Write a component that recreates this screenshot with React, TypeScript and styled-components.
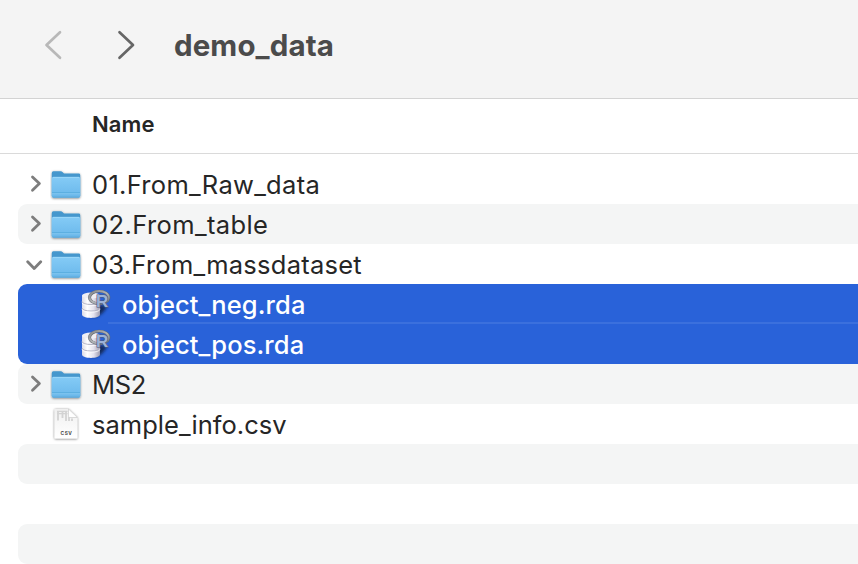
import React from "react";
import styled, { createGlobalStyle } from "styled-components";

const GlobalStyle = createGlobalStyle`
  html, body { margin: 0; background: #fff; overflow: hidden; }
  body { font-family: Inter, "Liberation Sans", sans-serif; color: #262626; }
  * { box-sizing: border-box; }
`;

const Window = styled.main`
  width: 858px;
  height: 564px;
  overflow: hidden;
  background: #fff;
  display: flex;
  flex-direction: column;
`;

const Toolbar = styled.header`
  flex: none;
  height: 99px;
  padding: 0 0 8px 44px;
  display: flex;
  align-items: center;
  background: #f4f4f4;
  border-bottom: 1px solid #d3d3d3;
`;

const NavButton = styled.button<{ $dim?: boolean }>`
  width: 20px;
  height: 32px;
  margin-right: ${(p) => (p.$dim ? 52 : 38)}px;
  padding: 0;
  border: 0;
  background: none;
  color: ${(p) => (p.$dim ? "#b8b8b8" : "#666")};
  svg { display: block; }
`;

const Title = styled.h1`
  margin: 0;
  font-size: 29.5px;
  font-weight: 700;
  line-height: 36px;
  letter-spacing: 0.1px;
  color: #4b4b4b;
`;

const ColumnHeader = styled.div`
  flex: none;
  height: 55px;
  padding: 0 0 4px 92px;
  display: flex;
  align-items: center;
  border-bottom: 1px solid #dadada;
  font-size: 22px;
  font-weight: 600;
  letter-spacing: 0.1px;
`;

const List = styled.div`
  padding: 10px 0 0 18px;
`;

const Row = styled.div<{ $stripe?: boolean }>`
  height: 40px;
  display: flex;
  align-items: center;
  padding-left: 8px;
  border-radius: 9px 0 0 9px;
  background: ${(p) => (p.$stripe ? "#f4f5f5" : "#fff")};
`;

const SelectionGroup = styled.div`
  background: #2962d9;
  border-radius: 9px 0 0 9px;
`;

const SelectionRule = styled.div`
  height: 2px;
  margin: -2px 0 0 90px;
  background: #3b70dd;
`;

const NestedRow = styled.div`
  height: 40px;
  padding-left: 58px;
  display: flex;
  align-items: center;
  color: #fff;
`;

const Slot = styled.span<{ $w: number }>`
  flex: none;
  width: ${(p) => p.$w}px;
  height: 40px;
  display: flex;
  align-items: center;
`;

const Label = styled.span<{ $track: number; $medium?: boolean }>`
  font-size: 25.5px;
  line-height: 40px;
  height: 40px;
  padding-top: 1px;
  font-weight: ${(p) => (p.$medium ? 500 : 400)};
  letter-spacing: ${(p) => p.$track}px;
  white-space: nowrap;
`;

const Disclosure = ({ open }: { open?: boolean }) => (
  <svg width="18" height="40" fill="none" stroke="#7d7d7d" strokeWidth="2.8" strokeLinecap="round" strokeLinejoin="round">
    <path d={open ? "M1.7 17.7 L8.2 24.5 L14.7 17.7" : "M6.5 13 L13.4 19.6 L6.5 26.2"} />
  </svg>
);

const Folder = () => (
  <svg width="34" height="40" viewBox="0 0 34 40">
    <defs>
      <linearGradient id="folderFront" x1="0" y1="0" x2="0" y2="1">
        <stop offset="0" stopColor="#84cbf6" />
        <stop offset="1" stopColor="#69b7ea" />
      </linearGradient>
      <filter id="folderShadow" x="-20%" y="-20%" width="140%" height="150%">
        <feDropShadow dx="0" dy="0.7" stdDeviation="0.8" floodOpacity="0.5" />
      </filter>
    </defs>
    <g filter="url(#folderShadow)">
      <path d="M1.8 9 Q1.8 7.3 3.5 7.3 H10.6 Q11.8 7.3 12.7 8.2 L14 9.6 H28.7 Q30.2 9.6 30.2 11 V32 Q30.2 33.4 28.7 33.4 H3.3 Q1.8 33.4 1.8 32 Z" fill="#4497cd" />
      <path d="M1.8 14 Q1.8 12.9 3 12.9 H29 Q30.2 12.9 30.2 14 V32 Q30.2 33.4 28.7 33.4 H3.3 Q1.8 33.4 1.8 32 Z" fill="url(#folderFront)" />
    </g>
    <path d="M3 13.3 H29" stroke="#a4dcfa" strokeWidth="0.8" />
    <path d="M2 28.6 H30" stroke="#55a9dc" strokeWidth="0.8" />
    <path d="M2 29.8 H30" stroke="#8bcbf0" strokeWidth="0.7" />
    <path d="M2.5 33 H29.5" stroke="#5ba5d1" strokeWidth="0.7" />
  </svg>
);

const CsvText = styled.text`
  font: 700 4.8px Inter, sans-serif;
  letter-spacing: 0.5px;
  fill: #444;
`;

const CsvFile = () => (
  <svg width="34" height="40" viewBox="0 0 34 40">
    <defs>
      <linearGradient id="paper" x1="0" y1="0" x2="0" y2="1">
        <stop offset="0" stopColor="#f0f0f0" />
        <stop offset="1" stopColor="#fff" />
      </linearGradient>
      <filter id="paperShadow" x="-20%" y="-20%" width="140%" height="140%">
        <feDropShadow dx="0" dy="0.5" stdDeviation="0.8" floodOpacity="0.6" />
      </filter>
    </defs>
    <path d="M5.5 5 H18.5 L27.4 13.5 V33.5 Q27.4 34.5 26.4 34.5 H5.5 Q4.5 34.5 4.5 33.5 V6 Q4.5 5 5.5 5 Z" fill="url(#paper)" filter="url(#paperShadow)" />
    <path d="M7 7.3 H17.5 M7 9.6 H17.5" stroke="#d3d3d3" strokeWidth="1.3" />
    <path d="M8 7 V16.5 M12.5 7 V14 M16 7 V17 M19 13 V17 M22 14.5 V17" stroke="#d3d3d3" strokeWidth="1.8" />
    <path d="M18.5 5 V12.3 Q18.5 13.5 19.7 13.5 H27.4 Z" fill="#fff" stroke="#c4c4c4" strokeWidth="0.6" />
    <CsvText x="10.6" y="31.1">CSV</CsvText>
  </svg>
);

const LogoLetter = styled.text`
  font: 700 17px "Liberation Sans", sans-serif;
  fill: #9db2d6;
  stroke: #4d5a78;
  stroke-width: 1.2px;
  paint-order: stroke;
`;

const RData = () => (
  <svg width="38" height="40" viewBox="0 0 38 40">
    <defs>
      <linearGradient id="drum" x1="0" y1="0" x2="1" y2="0">
        <stop offset="0" stopColor="#dcdbe6" />
        <stop offset="0.3" stopColor="#fff" />
        <stop offset="0.65" stopColor="#e4e2ee" />
        <stop offset="1" stopColor="#9d9bb0" />
      </linearGradient>
      <linearGradient id="ring" x1="0" y1="0" x2="1" y2="1">
        <stop offset="0" stopColor="#85888a" />
        <stop offset="0.55" stopColor="#b2b5b8" />
        <stop offset="1" stopColor="#747b8a" />
      </linearGradient>
      <filter id="drumBlur" x="-40%" y="-40%" width="180%" height="180%">
        <feGaussianBlur stdDeviation="1.5" />
      </filter>
    </defs>
    <path d="M16 31 L22 21 L31 22 Q28 30 20 33 H12 Z" fill="#101b3c" opacity="0.8" filter="url(#drumBlur)" />
    <path d="M6 11.5 V30.5 C6 35 24 35 24 30.5 V11.5 Z" fill="url(#drum)" />
    <ellipse cx="15" cy="11.5" rx="9" ry="3" fill="#efeff4" />
    <path d="M6 17.5 C6 21.5 24 21.5 24 17.5 M6 24 C6 28 24 28 24 24" fill="none" stroke="#b5b5c4" strokeWidth="1" />
    <path d="M6 18.7 C6 22.7 24 22.7 24 18.7 M6 25.2 C6 29.2 24 29.2 24 25.2" fill="none" stroke="#fff" strokeWidth="0.7" />
    <ellipse cx="23.2" cy="13.4" rx="9.6" ry="6.3" fill="none" stroke="#62686f" strokeWidth="2.9" />
    <ellipse cx="23.1" cy="13.2" rx="9.6" ry="6.3" fill="none" stroke="url(#ring)" strokeWidth="2" />
    <LogoLetter x="20" y="22.6">R</LogoLetter>
  </svg>
);

type Entry = { name: string; track: number; kind: "folder" | "csv"; open?: boolean; stripe?: boolean };

const FileRow = ({ name, track, kind, open, stripe }: Entry) => (
  <Row $stripe={stripe}>
    <Slot $w={24}>{kind === "folder" && <Disclosure open={open} />}</Slot>
    <Slot $w={42}>{kind === "folder" ? <Folder /> : <CsvFile />}</Slot>
    <Label $track={track}>{name}</Label>
  </Row>
);

const SelectedRow = ({ name, track }: { name: string; track: number }) => (
  <NestedRow>
    <Slot $w={46}><RData /></Slot>
    <Label $track={track} $medium>{name}</Label>
  </NestedRow>
);

export default function App() {
  return (
    <Window>
      <GlobalStyle />
      <Toolbar>
        <NavButton $dim aria-label="Back">
          <svg width="20" height="32" fill="none" stroke="currentColor" strokeWidth="2.7" strokeLinecap="round" strokeLinejoin="round">
            <path d="M16 3.2 L2.5 16 L16 28.8" />
          </svg>
        </NavButton>
        <NavButton aria-label="Forward">
          <svg width="20" height="32" fill="none" stroke="currentColor" strokeWidth="2.7" strokeLinecap="round" strokeLinejoin="round">
            <path d="M3.5 3.2 L17 16 L3.5 28.8" />
          </svg>
        </NavButton>
        <Title>demo_data</Title>
      </Toolbar>
      <ColumnHeader>Name</ColumnHeader>
      <List>
        <FileRow name="01.From_Raw_data" track={0.3} kind="folder" />
        <FileRow name="02.From_table" track={0.4} kind="folder" stripe />
        <FileRow name="03.From_massdataset" track={0.25} kind="folder" open />
        <SelectionGroup>
          <SelectedRow name="object_neg.rda" track={0.1} />
          <SelectionRule />
          <SelectedRow name="object_pos.rda" track={0.1} />
        </SelectionGroup>
        <FileRow name="MS2" track={-0.3} kind="folder" stripe />
        <FileRow name="sample_info.csv" track={0.03} kind="csv" />
        <Row $stripe />
        <Row />
        <Row $stripe />
      </List>
    </Window>
  );
}
